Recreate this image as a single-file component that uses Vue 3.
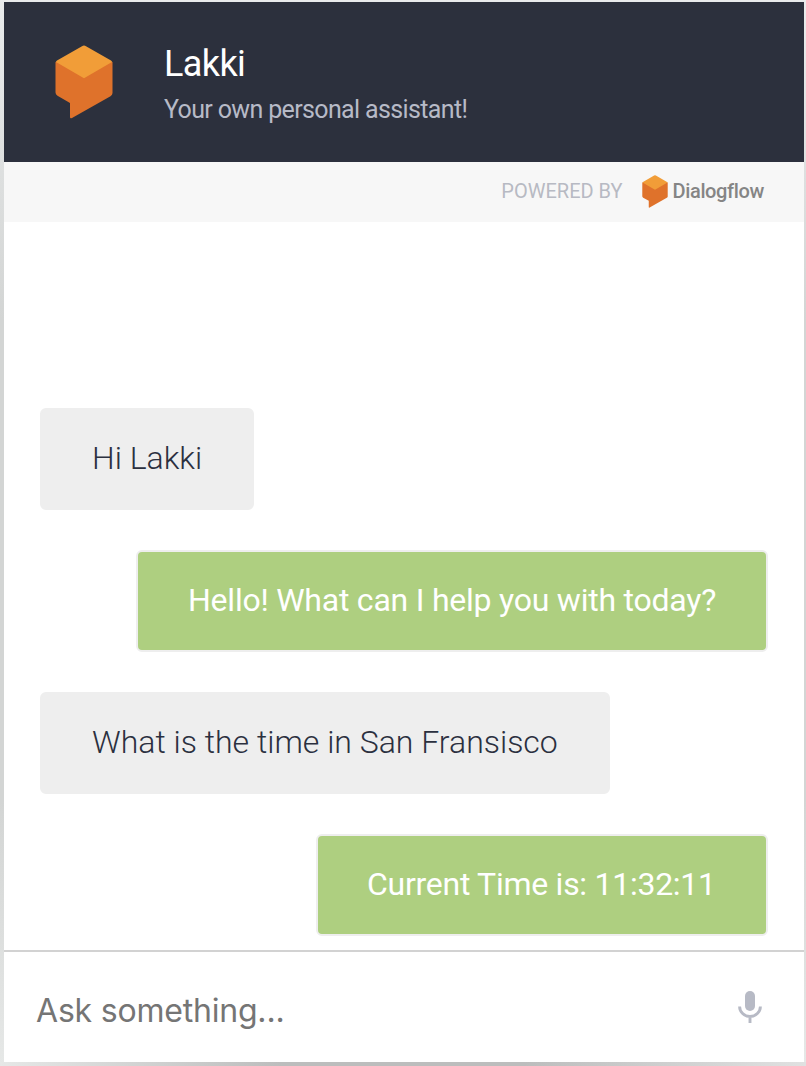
<script setup>
const messages = [
  { from: 'user', text: 'Hi Lakki', cls: 'm1' },
  { from: 'bot', text: 'Hello! What can I help you with today?', cls: 'm2' },
  { from: 'user', text: 'What is the time in San Fransisco', cls: 'm3' },
  { from: 'bot', text: 'Current Time is: 11:32:11', cls: 'm4' },
]
</script>

<template>
  <div class="page">
    <main class="widget">
      <header class="header">
        <svg class="logo" viewBox="0 0 58 74">
          <path fill="#df722b" d="M.5 17 29 10l28.500 7v31q0 2-2 3.200L17 73q-2 1-2-1V58L2.500 50.800Q.5 49.500.5 47.500Z" />
          <path fill="#f19d38" d="M27 1.200q2-1.200 4 0L56 15.500q1 .8 1 1.500L29 33.200 1 17q0-.7 1-1.500Z" />
        </svg>
        <div class="titles">
          <h1>Lakki</h1>
          <p>Your own personal assistant!</p>
        </div>
      </header>
      <div class="powered">
        <span class="by">POWERED BY</span>
        <svg class="mini" viewBox="0 0 58 74">
          <path fill="#df722b" d="M.5 17 29 10l28.500 7v31q0 2-2 3.200L17 73q-2 1-2-1V58L2.500 50.800Q.5 49.500.5 47.500Z" />
          <path fill="#f19d38" d="M27 1.200q2-1.200 4 0L56 15.500q1 .8 1 1.500L29 33.200 1 17q0-.7 1-1.500Z" />
        </svg>
        <span class="brand">Dialogflow</span>
      </div>
      <section class="chat">
        <div v-for="m in messages" :key="m.text" class="bubble" :class="[m.from, m.cls]">
          <span>{{ m.text }}</span>
        </div>
      </section>
      <footer class="ask">
        <span class="placeholder">Ask something...</span>
        <svg class="mic" viewBox="0 0 24 32">
          <rect x="7" y="0" width="10" height="20" rx="5" fill="#b7bac5" />
          <path d="M1.600 15.500a10.400 10 0 0 0 20.800 0M12 25.500V32" fill="none" stroke="#b7bac5" stroke-width="2.900" />
        </svg>
      </footer>
    </main>
  </div>
</template>

<style scoped>
.page {
  box-sizing: border-box;
  width: 806px;
  height: 1066px;
  padding: 2px 2px 4px 4px;
  background:
    linear-gradient(90deg, #e6e8e7, #bcbdbd 35%, #bcbdbd 65%, #e0e1e1) bottom / 100% 4px no-repeat,
    linear-gradient(#e9ebec, #d3d5d4 30%, #d3d5d4 75%, #e6e8e7);
  font-family: Roboto, "Liberation Sans", sans-serif;
}
.widget {
  display: flex;
  flex-direction: column;
  height: 1060px;
  background: #fff;
}
.header {
  box-sizing: border-box;
  display: flex;
  height: 160px;
  padding: 42px 0 0 50px;
  background: #2c303d;
}
.logo {
  width: 58px;
  height: 74px;
  margin: 0.5px 0 0 0.5px;
}
.titles {
  margin-left: 51.5px;
}
h1, p {
  margin: 0;
  font-weight: 400;
  white-space: nowrap;
}
h1 {
  font-size: 36px;
  line-height: 40px;
  letter-spacing: -0.6px;
  color: #fff;
}
p {
  margin-top: 11px;
  font-size: 25px;
  line-height: 30px;
  letter-spacing: -0.64px;
  color: #b7bac7;
}
.powered {
  box-sizing: border-box;
  display: flex;
  align-items: center;
  justify-content: flex-end;
  height: 60px;
  padding: 0 40px 2px 0;
  background: #f7f7f7;
}
.by {
  font-size: 20px;
  color: #b7bac3;
}
.mini {
  width: 26px;
  height: 33px;
  margin: 1px 0 0 19px;
}
.brand {
  margin-left: 5px;
  font-size: 20px;
  font-weight: 500;
  letter-spacing: -0.36px;
  color: #858585;
}
.chat {
  display: flex;
  flex-direction: column;
  gap: 40px;
  height: 728px;
  box-sizing: border-box;
  padding: 186px 36px 0;
}
.bubble {
  box-sizing: border-box;
  flex: none;
  height: 102px;
  border: 2px solid #eee;
  border-radius: 6px;
  padding: 0 50px;
  font-size: 32px;
  line-height: 97px;
  white-space: nowrap;
}
.user {
  align-self: flex-start;
  background: #eee;
  color: #2b303f;
  font-weight: 300;
}
.bot {
  align-self: flex-end;
  background: #aecf80;
  color: #fff;
  letter-spacing: -0.23px;
}
.m1 { width: 214px; }
.m2 { width: 632px; }
.m3 { width: 570px; }
.m4 {
  width: 452px;
  padding-left: 49px;
  letter-spacing: -0.27px;
}
.ask {
  box-sizing: border-box;
  display: flex;
  align-items: center;
  justify-content: space-between;
  height: 112px;
  padding: 6px 42px 0 32px;
  border-top: 2px solid #d2d2d2;
}
.placeholder {
  font-family: Inter, sans-serif;
  font-size: 32px;
  letter-spacing: -0.2px;
  color: #757575;
}
.mic {
  width: 24px;
  height: 32px;
  margin-bottom: 6px;
}
</style>
